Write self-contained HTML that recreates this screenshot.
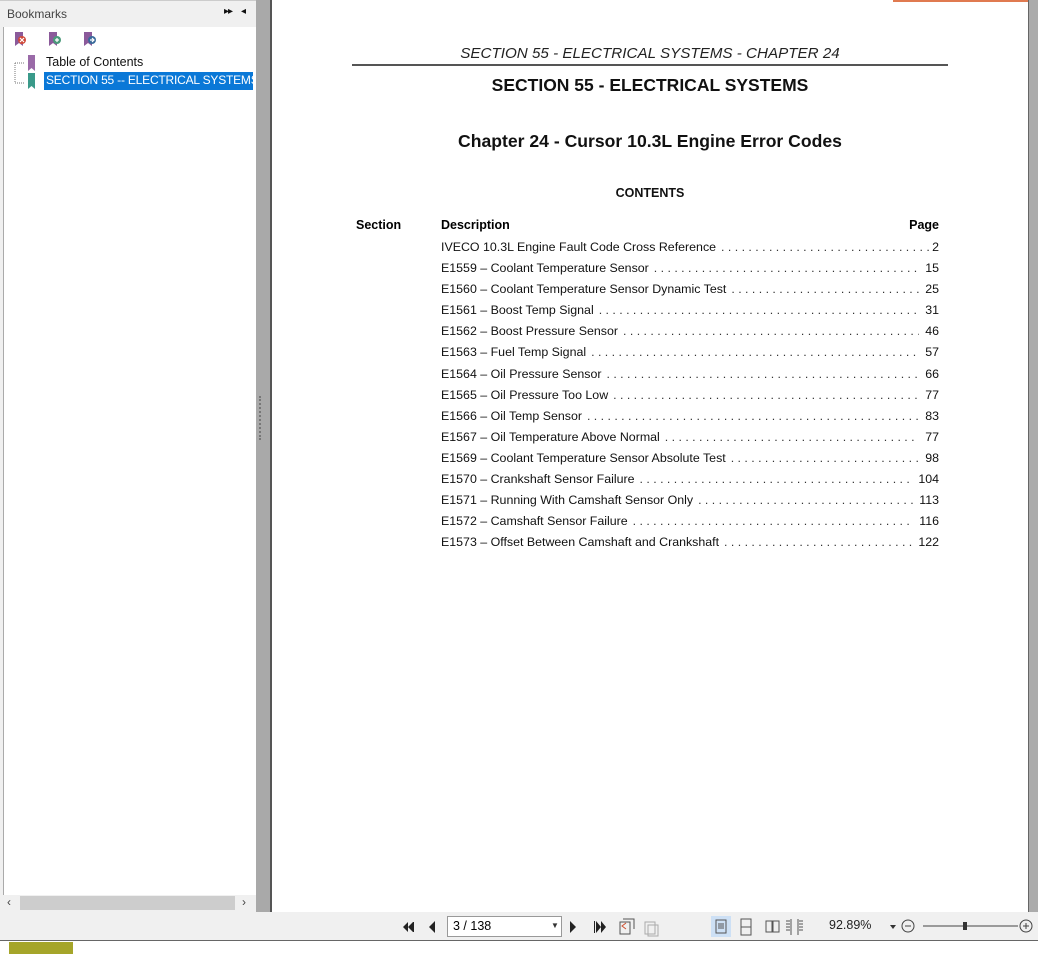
<!DOCTYPE html>
<html><head><meta charset="utf-8"><style>
*{margin:0;padding:0;box-sizing:border-box}
body{width:1038px;height:954px;position:relative;background:#fff;font-family:"Liberation Sans",sans-serif;overflow:hidden}
.abs{position:absolute}
.row{position:absolute;left:441px;width:498px;height:21px;display:flex;font-size:12.4px;color:#111;line-height:21px;white-space:nowrap}
.row .d{flex:none}
.row .l{flex:1;overflow:hidden;letter-spacing:3.4px;color:#333;padding-left:5px}
.row .p{flex:none;padding-left:6px}
</style></head><body>
<!-- left panel -->
<div class="abs" style="left:0;top:0;width:256px;height:912px;background:#f0f0f0"></div>
<div class="abs" style="left:0;top:0;width:256px;height:1px;background:#ccc"></div>
<div class="abs" style="left:7px;top:7px;font-size:12px;color:#444">Bookmarks</div>
<div class="abs" style="left:224px;top:6px;font-size:10px;color:#111;letter-spacing:-1px">▸▸</div>
<div class="abs" style="left:241px;top:6px;font-size:10px;color:#111">◂</div>
<div class="abs" style="left:3px;top:27px;width:253px;height:868px;background:#fff;border-left:1px solid #aaa"></div>
<svg class="abs" style="left:12px;top:30px" width="90" height="18">
<path d="M3 2h8v14l-4-3-4 3z" fill="#8b5a9a"/><circle cx="10" cy="10" r="4" fill="#d04a3a"/><path d="M8 8l4 4M12 8l-4 4" stroke="#fff" stroke-width="1.2"/>
<path d="M37 2h8v14l-4-3-4 3z" fill="#8b5a9a"/><circle cx="45" cy="10" r="4" fill="#4a9a7a"/><path d="M43 10h4M45 8v4" stroke="#fff" stroke-width="1.2"/>
<path d="M72 2h8v14l-4-3-4 3z" fill="#8b5a9a"/><circle cx="80" cy="10" r="4" fill="#3a6a9a"/><path d="M78 10h4M80 8l2 2-2 2" stroke="#fff" stroke-width="1.2" fill="none"/>
</svg>
<svg class="abs" style="left:12px;top:54px" width="30" height="36">
<path d="M3 9v20M3 9h10M3 29h10" stroke="#777" stroke-dasharray="1 1" fill="none"/>
<path d="M16 1h7v16l-3.5-3-3.5 3z" fill="#9a6aa8"/>
<path d="M16 19h7v16l-3.5-3-3.5 3z" fill="#3a9a8a"/>
</svg>
<div class="abs" style="left:46px;top:55px;font-size:12.5px;color:#111">Table of Contents</div>
<div class="abs" style="left:44px;top:72px;width:209px;height:18px;background:#0a78d7;color:#fff;font-size:12px;padding-left:2px;line-height:17px;white-space:nowrap;overflow:hidden;letter-spacing:-0.2px">SECTION 55 -- ELECTRICAL SYSTEMS</div>
<div class="abs" style="left:3px;top:895px;width:253px;height:17px;background:#f0f0f0"></div>
<div class="abs" style="left:20px;top:896px;width:215px;height:14px;background:#cdcdcd"></div>
<div class="abs" style="left:7px;top:895px;font-size:12px;color:#444">‹</div>
<div class="abs" style="left:242px;top:895px;font-size:12px;color:#444">›</div>
<div class="abs" style="left:256px;top:0;width:14px;height:912px;background:#a9a9a9"></div>
<div class="abs" style="left:259px;top:396px;width:2px;height:44px;border-left:2px dotted #777"></div>
<div class="abs" style="left:270px;top:0;width:2px;height:912px;background:#555"></div>
<div class="abs" style="left:1028px;top:0;width:10px;height:912px;background:#ababab;border-left:1px solid #666"></div>
<div class="abs" style="left:893px;top:0;width:135px;height:2px;background:#e07a50"></div>
<!-- page content -->
<div class="abs" style="left:352px;top:45px;width:596px;text-align:center;font-style:italic;font-size:15.2px;color:#222">SECTION 55 - ELECTRICAL SYSTEMS - CHAPTER 24</div>
<div class="abs" style="left:352px;top:64px;width:596px;height:2px;background:#555"></div>
<div class="abs" style="left:352px;top:75px;width:596px;text-align:center;font-weight:bold;font-size:17.5px;color:#111">SECTION 55 - ELECTRICAL SYSTEMS</div>
<div class="abs" style="left:352px;top:131px;width:596px;text-align:center;font-weight:bold;font-size:17.6px;color:#111">Chapter 24 - Cursor 10.3L Engine Error Codes</div>
<div class="abs" style="left:352px;top:186px;width:596px;text-align:center;font-weight:bold;font-size:12.5px;color:#111">CONTENTS</div>
<div class="abs" style="left:356px;top:218px;font-weight:bold;font-size:12.5px">Section</div>
<div class="abs" style="left:441px;top:218px;font-weight:bold;font-size:12.5px">Description</div>
<div class="abs" style="left:900px;top:218px;width:39px;text-align:right;font-weight:bold;font-size:12.5px">Page</div>

<div class="row" style="top:237px"><span class="d">IVECO 10.3L Engine Fault Code Cross Reference</span><span class="l">........................................................................</span><span class="p" style="padding-left:2px">2</span></div>
<div class="row" style="top:258px"><span class="d">E1559 – Coolant Temperature Sensor</span><span class="l">........................................................................</span><span class="p">15</span></div>
<div class="row" style="top:279px"><span class="d">E1560 – Coolant Temperature Sensor Dynamic Test</span><span class="l">........................................................................</span><span class="p">25</span></div>
<div class="row" style="top:300px"><span class="d">E1561 – Boost Temp Signal</span><span class="l">........................................................................</span><span class="p">31</span></div>
<div class="row" style="top:321px"><span class="d">E1562 – Boost Pressure Sensor</span><span class="l">........................................................................</span><span class="p">46</span></div>
<div class="row" style="top:342px"><span class="d">E1563 – Fuel Temp Signal</span><span class="l">........................................................................</span><span class="p">57</span></div>
<div class="row" style="top:364px"><span class="d">E1564 – Oil Pressure Sensor</span><span class="l">........................................................................</span><span class="p">66</span></div>
<div class="row" style="top:385px"><span class="d">E1565 – Oil Pressure Too Low</span><span class="l">........................................................................</span><span class="p">77</span></div>
<div class="row" style="top:406px"><span class="d">E1566 – Oil Temp Sensor</span><span class="l">........................................................................</span><span class="p">83</span></div>
<div class="row" style="top:427px"><span class="d">E1567 – Oil Temperature Above Normal</span><span class="l">........................................................................</span><span class="p">77</span></div>
<div class="row" style="top:448px"><span class="d">E1569 – Coolant Temperature Sensor Absolute Test</span><span class="l">........................................................................</span><span class="p">98</span></div>
<div class="row" style="top:469px"><span class="d">E1570 – Crankshaft Sensor Failure</span><span class="l">........................................................................</span><span class="p">104</span></div>
<div class="row" style="top:490px"><span class="d">E1571 – Running With Camshaft Sensor Only</span><span class="l">........................................................................</span><span class="p">113</span></div>
<div class="row" style="top:511px"><span class="d">E1572 – Camshaft Sensor Failure</span><span class="l">........................................................................</span><span class="p">116</span></div>
<div class="row" style="top:532px"><span class="d">E1573 – Offset Between Camshaft and Crankshaft</span><span class="l">........................................................................</span><span class="p">122</span></div>

<!-- bottom toolbar -->
<div class="abs" style="left:0;top:912px;width:1038px;height:29px;background:#f0f0f0;border-bottom:1px solid #666"></div>
<div class="abs" style="left:9px;top:942px;width:64px;height:12px;background:#a5a52a"></div>
<svg class="abs" style="left:400px;top:916px" width="640" height="22">
<path d="M3 11l5-5v10zM8 11l5-5v10z M13 6h1v10h-1z" fill="#222"/>
<path d="M29 11l6-6v12z" fill="#222"/>
<path d="M170 5l6 6-6 6z" fill="#222"/>
<path d="M194 5v12h1v-12zM196 5l5 6-5 6zM201 5l5 6-5 6z" fill="#222"/>
<rect x="220" y="6" width="10" height="12" fill="none" stroke="#555"/><path d="M223 3h11v10" fill="none" stroke="#555"/><path d="M226 7l-4 3 4 3" stroke="#d05030" fill="none"/>
<rect x="245" y="6" width="10" height="12" fill="none" stroke="#aaa"/><rect x="248" y="9" width="10" height="11" fill="none" stroke="#aaa"/>
<rect x="311" y="0" width="20" height="21" fill="#cde0f5"/>
<rect x="316" y="4" width="10" height="13" fill="none" stroke="#555"/><path d="M318 8h6M318 10h6M318 12h6" stroke="#555"/>
<rect x="341" y="3" width="10" height="16" fill="none" stroke="#555"/><path d="M341 11h10" stroke="#555"/>
<rect x="366" y="5" width="6" height="11" fill="none" stroke="#555"/><rect x="373" y="5" width="6" height="11" fill="none" stroke="#555"/>
<path d="M391 3v16M398 3v16M386 5h4M386 8h4M386 11h4M386 14h4M399 5h4M399 8h4M399 11h4M399 14h4" stroke="#555"/>
<path d="M490 9l3 4 3-4z" fill="#333"/>
<circle cx="508" cy="10" r="6" fill="none" stroke="#444"/><path d="M505 10h6" stroke="#444"/>
<path d="M523 10h95" stroke="#444"/><rect x="563" y="6" width="4" height="8" fill="#333"/>
<circle cx="626" cy="10" r="6" fill="none" stroke="#444"/><path d="M623 10h6M626 7v6" stroke="#444"/>
</svg>
<div class="abs" style="left:447px;top:916px;width:115px;height:21px;background:#fff;border:1px solid #999;font-size:12.5px;padding-left:5px;line-height:19px">3 / 138</div>
<div class="abs" style="left:551px;top:921px;font-size:8px;color:#333">▼</div>
<div class="abs" style="left:829px;top:918px;font-size:12.5px;color:#222">92.89%</div>
</body></html>
